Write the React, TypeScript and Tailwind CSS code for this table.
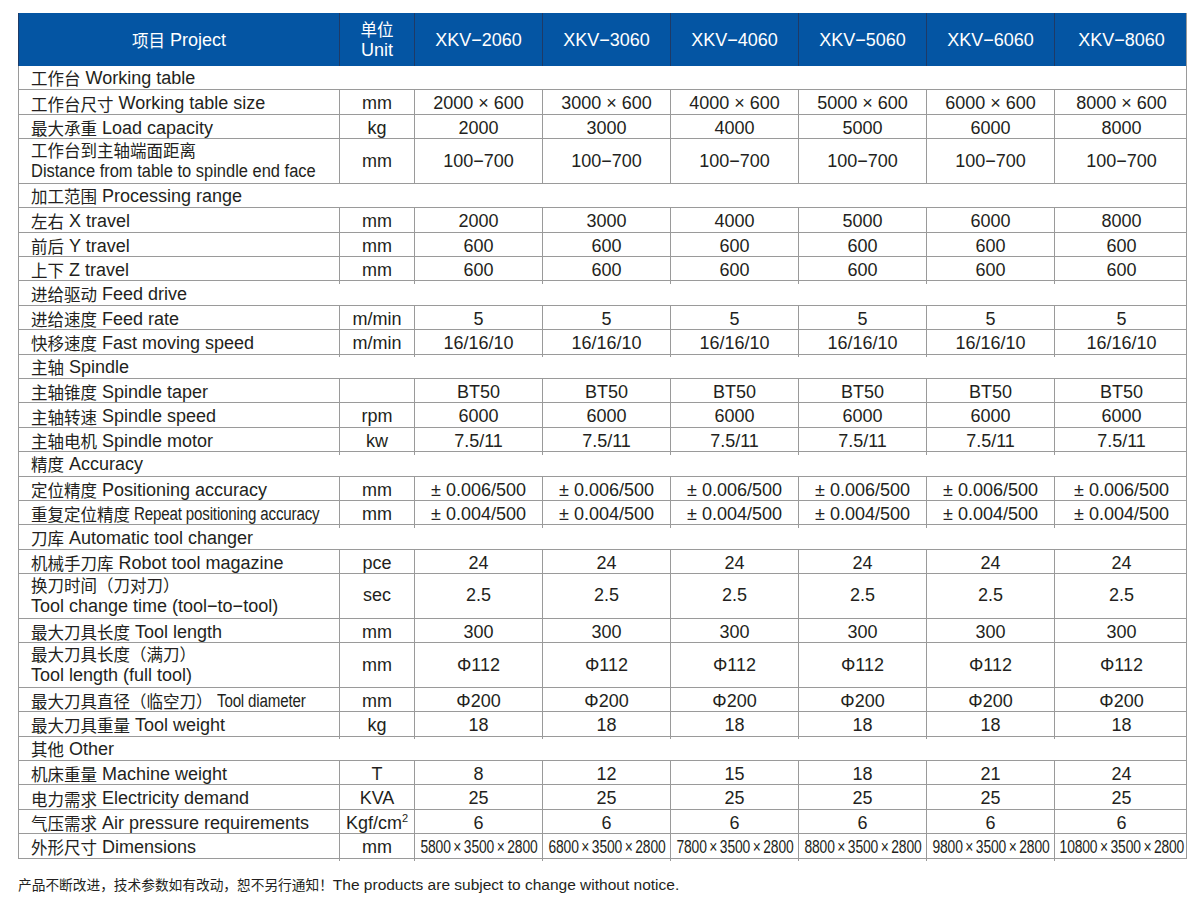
import React from "react";

type Row =
  | { kind: "section"; zh: string; en: string }
  | {
      kind: "row";
      zh: string;
      en: string;
      unit: React.ReactNode;
      values: string[];
      double?: boolean;
      condensed?: boolean;
      narrowEn?: boolean;
      narrowValues?: boolean;
    };

const rep = (v: string) => [v, v, v, v, v, v];

const rows: Row[] = [
  { kind: "section", zh: "工作台", en: "Working table" },
  { kind: "row", zh: "工作台尺寸", en: "Working table size", unit: "mm", values: ["2000 × 600", "3000 × 600", "4000 × 600", "5000 × 600", "6000 × 600", "8000 × 600"] },
  { kind: "row", zh: "最大承重", en: "Load capacity", unit: "kg", values: ["2000", "3000", "4000", "5000", "6000", "8000"] },
  { kind: "row", zh: "工作台到主轴端面距离", en: "Distance from table to spindle end face", unit: "mm", values: rep("100−700"), double: true, narrowEn: true },
  { kind: "section", zh: "加工范围", en: "Processing range" },
  { kind: "row", zh: "左右", en: "X travel", unit: "mm", values: ["2000", "3000", "4000", "5000", "6000", "8000"] },
  { kind: "row", zh: "前后", en: "Y travel", unit: "mm", values: rep("600") },
  { kind: "row", zh: "上下", en: "Z travel", unit: "mm", values: rep("600") },
  { kind: "section", zh: "进给驱动", en: "Feed drive" },
  { kind: "row", zh: "进给速度", en: "Feed rate", unit: "m/min", values: rep("5") },
  { kind: "row", zh: "快移速度", en: "Fast moving speed", unit: "m/min", values: rep("16/16/10") },
  { kind: "section", zh: "主轴", en: "Spindle" },
  { kind: "row", zh: "主轴锥度", en: "Spindle taper", unit: "", values: rep("BT50") },
  { kind: "row", zh: "主轴转速", en: "Spindle speed", unit: "rpm", values: rep("6000") },
  { kind: "row", zh: "主轴电机", en: "Spindle motor", unit: "kw", values: rep("7.5/11") },
  { kind: "section", zh: "精度", en: "Accuracy" },
  { kind: "row", zh: "定位精度", en: "Positioning accuracy", unit: "mm", values: rep("± 0.006/500") },
  { kind: "row", zh: "重复定位精度", en: "Repeat positioning accuracy", unit: "mm", values: rep("± 0.004/500"), condensed: true },
  { kind: "section", zh: "刀库", en: "Automatic tool changer" },
  { kind: "row", zh: "机械手刀库", en: "Robot tool magazine", unit: "pce", values: rep("24") },
  { kind: "row", zh: "换刀时间（刀对刀）", en: "Tool change time (tool−to−tool)", unit: "sec", values: rep("2.5"), double: true },
  { kind: "row", zh: "最大刀具长度", en: "Tool length", unit: "mm", values: rep("300") },
  { kind: "row", zh: "最大刀具长度（满刀）", en: "Tool length (full tool)", unit: "mm", values: rep("Φ112"), double: true },
  { kind: "row", zh: "最大刀具直径（临空刀）", en: "Tool diameter", unit: "mm", values: rep("Φ200"), condensed: true },
  { kind: "row", zh: "最大刀具重量", en: "Tool weight", unit: "kg", values: rep("18") },
  { kind: "section", zh: "其他", en: "Other" },
  { kind: "row", zh: "机床重量", en: "Machine weight", unit: "T", values: ["8", "12", "15", "18", "21", "24"] },
  { kind: "row", zh: "电力需求", en: "Electricity demand", unit: "KVA", values: rep("25") },
  {
    kind: "row",
    zh: "气压需求",
    en: "Air pressure requirements",
    unit: (
      <span>
        Kgf/cm<sup className="text-[11px] relative -top-[7px] align-baseline">2</sup>
      </span>
    ),
    values: rep("6"),
  },
  {
    kind: "row",
    zh: "外形尺寸",
    en: "Dimensions",
    unit: "mm",
    values: [
      "5800\u2009×\u20093500\u2009×\u20092800",
      "6800\u2009×\u20093500\u2009×\u20092800",
      "7800\u2009×\u20093500\u2009×\u20092800",
      "8800\u2009×\u20093500\u2009×\u20092800",
      "9800\u2009×\u20093500\u2009×\u20092800",
      "10800\u2009×\u20093500\u2009×\u20092800",
    ],
    narrowValues: true,
  },
];

const models = ["XKV−2060", "XKV−3060", "XKV−4060", "XKV−5060", "XKV−6060", "XKV−8060"];

const cols = "grid grid-cols-[320px_75px_128px_128px_128px_128px_128px_134px]";
const font = { fontFamily: '"Liberation Sans", Arial, "Noto Sans CJK SC", sans-serif' };

function Zh({ children }: { children: React.ReactNode }) {
  return (
    <span className="text-[16.5px]" style={{ fontFamily: '"Noto Sans CJK SC", sans-serif' }}>
      {children}
    </span>
  );
}

export default function App() {
  return (
    <div className="w-[1200px] h-[907px] bg-white text-[#231f20]" style={font}>
      <div className="pt-[13px] pl-[18px]">
        <div className="w-[1169px] border-r border-[#9a9a9a]">
          {/* header */}
          <div className={`${cols} h-[53px] bg-[#0455a3] text-white text-[18px] border-l border-[#1e3a66]`}>
            <div className="flex items-center justify-center pt-[2px]">
              <Zh>项目</Zh>
              <span className="ml-[5px]">Project</span>
            </div>
            <div className="flex flex-col items-center justify-center border-l border-[#1e3a66] leading-[21px]">
              <Zh>单位</Zh>
              <span>Unit</span>
            </div>
            {models.map((m) => (
              <div key={m} className="flex items-center justify-center border-l border-[#1e3a66] pt-[2px]">
                {m}
              </div>
            ))}
          </div>
          {/* body */}
          <div className="border-l border-[#9a9a9a] text-[18px]">
            {rows.map((r, i) => {
              if (r.kind === "section") {
                return (
                  <div key={i} className="h-[24.4px] border-b border-[#9a9a9a] flex items-center pl-[12px] pt-[2px]">
                    <Zh>{r.zh}</Zh>
                    <span className="ml-[5px]">{r.en}</span>
                  </div>
                );
              }
              const h = r.double ? "h-[44.7px]" : "h-[24.4px]";
              return (
                <div key={i} className={`${cols} ${h} border-b border-[#9a9a9a]`}>
                  <div className="flex items-center pl-[12px] overflow-visible whitespace-nowrap">
                    {r.double ? (
                      <div className="flex flex-col items-start leading-[21px]">
                        <Zh>{r.zh}</Zh>
                        {r.narrowEn ? (
                          <span className="inline-block origin-left scale-x-[0.915]">{r.en}</span>
                        ) : (
                          <span>{r.en}</span>
                        )}
                      </div>
                    ) : (
                      <>
                        <Zh>{r.zh}</Zh>
                        {r.condensed ? (
                          <span className="ml-[4px] inline-block origin-left scale-x-[0.84] tracking-[-0.2px]">{r.en}</span>
                        ) : (
                          <span className="ml-[5px]">{r.en}</span>
                        )}
                      </>
                    )}
                  </div>
                  <div className="flex items-center justify-center border-l border-[#9a9a9a] whitespace-nowrap">{r.unit}</div>
                  {r.values.map((v, j) => (
                    <div key={j} className="flex items-center justify-center border-l border-[#9a9a9a] whitespace-nowrap">
                      {r.narrowValues ? (
                        <span className="inline-block origin-center scale-x-[0.77] tracking-[-0.2px]">{v}</span>
                      ) : (
                        <span>{v}</span>
                      )}
                    </div>
                  ))}
                </div>
              );
            })}
          </div>
        </div>
        <div className="mt-[15px] leading-[20px] text-[#231f20]">
          <span className="text-[13.7px]" style={{ fontFamily: '"Noto Sans CJK SC", sans-serif' }}>
            产品不断改进，技术参数如有改动，恕不另行通知！
          </span>
          <span className="text-[15.5px]">The products are subject to change without notice.</span>
        </div>
      </div>
    </div>
  );
}
